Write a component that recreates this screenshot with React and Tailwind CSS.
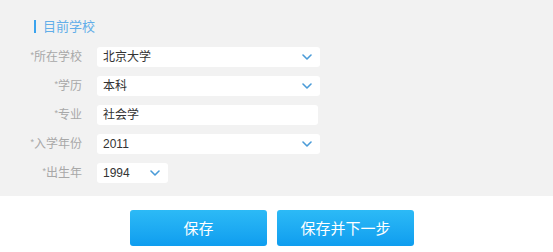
import React from "react";

const font = { fontFamily: '"Liberation Sans", "Noto Sans CJK SC", sans-serif' };

function Chevron() {
  return (
    <svg width="10" height="6" viewBox="0 0 10 6" className="shrink-0">
      <path d="M1 1 L5 5 L9 1" fill="none" stroke="#4a9bd8" strokeWidth="1.6" strokeLinecap="round" strokeLinejoin="round" />
    </svg>
  );
}

function Row({ label, value, select = true, width = "w-[223px]" }) {
  return (
    <div className="flex items-center h-5">
      <div className="w-[82px] text-right text-[12px] text-[#a8a8a8] leading-none">
        <span className="text-[9px] align-top">*</span>
        {label}
      </div>
      <div className={`ml-[15px] ${width} h-5 bg-white rounded-[3px] flex items-center justify-between pl-[6px] pr-[8px] text-[12px] text-[#333] leading-none`}>
        <span>{value}</span>
        {select && <Chevron />}
      </div>
    </div>
  );
}

export default function App() {
  return (
    <div className="w-[553px] h-[252px] bg-white overflow-hidden" style={font}>
      <div className="h-[196px] bg-[#f2f2f2] pt-[20px]">
        <div className="flex items-center ml-[34px] h-[13px]">
          <div className="w-[2px] h-[13px] bg-[#3aa3ee]" />
          <div className="ml-[7px] text-[13px] text-[#62aee9] leading-none">目前学校</div>
        </div>
        <div className="mt-[14px] flex flex-col gap-[9px]">
          <Row label="所在学校" value="北京大学" />
          <Row label="学历" value="本科" />
          <Row label="专业" value="社会学" select={false} width="w-[221px]" />
          <Row label="入学年份" value="2011" />
          <Row label="出生年" value="1994" width="w-[71px]" />
        </div>
      </div>
      <div className="flex ml-[130px] mt-[14px] gap-[10px]">
        <button className="w-[137px] h-[36px] rounded-[3px] bg-gradient-to-b from-[#2cbaf6] to-[#0e9def] text-white text-[15px] leading-none">保存</button>
        <button className="w-[137px] h-[36px] rounded-[3px] bg-gradient-to-b from-[#2cbaf6] to-[#0e9def] text-white text-[15px] leading-none">保存并下一步</button>
      </div>
    </div>
  );
}
